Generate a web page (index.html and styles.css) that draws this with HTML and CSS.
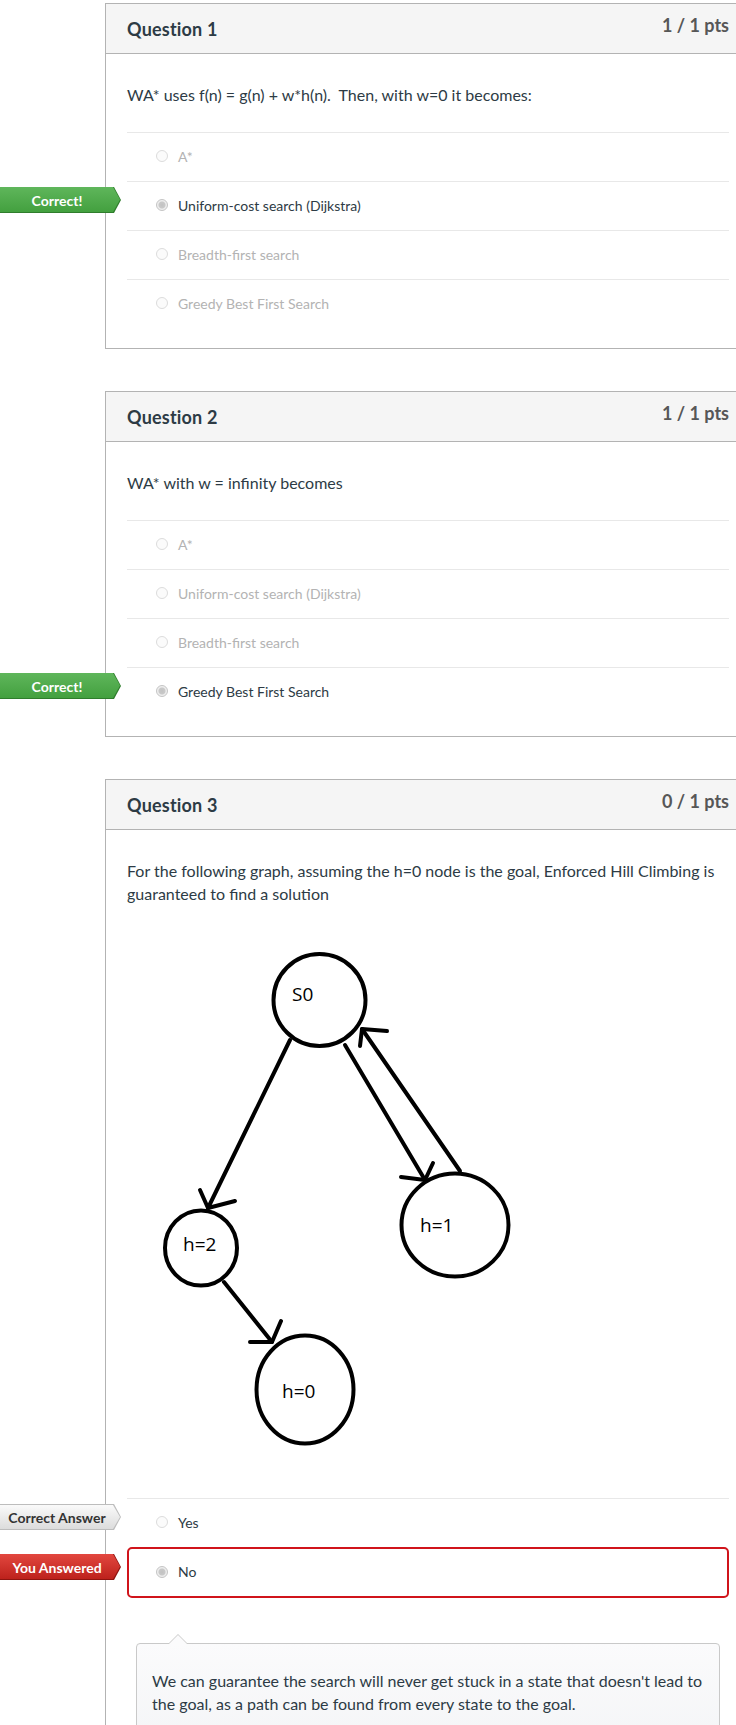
FILE: index.html
```html
<!DOCTYPE html>
<html>
<head>
<meta charset="utf-8">
<link rel="stylesheet" href="styles.css">
</head>
<body>
<div class="page">

  <div class="question">
    <div class="q-header"><span class="q-title">Question 1</span><span class="q-pts">1 / 1 pts</span></div>
    <div class="q-body">
      <div class="q-text">WA* uses f(n) = g(n) + w*h(n).&nbsp; Then, with w=0 it becomes:</div>
      <div class="answers">
        <div class="answer"><span class="radio"></span><span class="label">A*</span></div>
        <div class="answer selected"><span class="badge badge-correct">Correct!</span><span class="radio checked"></span><span class="label">Uniform-cost search (Dijkstra)</span></div>
        <div class="answer"><span class="radio"></span><span class="label">Breadth-first search</span></div>
        <div class="answer"><span class="radio"></span><span class="label">Greedy Best First Search</span></div>
      </div>
    </div>
  </div>

  <div class="question">
    <div class="q-header"><span class="q-title">Question 2</span><span class="q-pts">1 / 1 pts</span></div>
    <div class="q-body">
      <div class="q-text">WA* with w = infinity becomes</div>
      <div class="answers">
        <div class="answer"><span class="radio"></span><span class="label">A*</span></div>
        <div class="answer"><span class="radio"></span><span class="label">Uniform-cost search (Dijkstra)</span></div>
        <div class="answer"><span class="radio"></span><span class="label">Breadth-first search</span></div>
        <div class="answer selected"><span class="badge badge-correct">Correct!</span><span class="radio checked"></span><span class="label">Greedy Best First Search</span></div>
      </div>
    </div>
  </div>

  <div class="question">
    <div class="q-header"><span class="q-title">Question 3</span><span class="q-pts">0 / 1 pts</span></div>
    <div class="q-body">
      <div class="q-text">For the following graph, assuming the h=0 node is the goal, Enforced Hill Climbing is guaranteed to find a solution</div>
      <svg class="graph" width="420" height="567" viewBox="127 905 420 567" xmlns="http://www.w3.org/2000/svg">
        <g fill="none" stroke="#000" stroke-width="4" stroke-linecap="round" stroke-linejoin="round">
          <ellipse cx="319.5" cy="1000" rx="46" ry="46"/>
          <ellipse cx="201" cy="1248" rx="36" ry="37.5"/>
          <ellipse cx="455" cy="1225" rx="53.5" ry="51.5"/>
          <ellipse cx="305" cy="1389.5" rx="48.5" ry="54"/>
          <path d="M290 1040 L208 1208"/>
          <path d="M200 1190 L208 1208 L235 1201"/>
          <path d="M345 1045 L425 1180"/>
          <path d="M401 1177 L425 1180 L433 1163"/>
          <path d="M460 1171 L362 1029"/>
          <path d="M387 1031 L362 1029 L360 1046"/>
          <path d="M224 1282 L272 1342"/>
          <path d="M250 1342 L272 1342 L281 1321"/>
        </g>
        <g class="node-label">
          <text x="292" y="1001">S0</text>
          <text x="183" y="1251">h=2</text>
          <text x="420" y="1232">h=1</text>
          <text x="282" y="1398">h=0</text>
        </g>
      </svg>
      <div class="answers">
        <div class="answer shown"><span class="badge badge-answer">Correct Answer</span><span class="radio"></span><span class="label">Yes</span></div>
        <div class="answer wrong"><span class="badge badge-wrong">You Answered</span><span class="radio checked"></span><span class="label">No</span></div>
      </div>
      <div class="comment">
        <p>We can guarantee the search will never get stuck in a state that doesn't lead to the goal, as a path can be found from every state to the goal.</p>
      </div>
    </div>
  </div>

</div>
</body>
</html>
```

FILE: styles.css
```css
html, body {
  margin: 0;
  padding: 0;
  background: #fff;
  overflow: hidden;
}

body {
  font-family: Lato, "Open Sans", "Liberation Sans", sans-serif;
  color: #2d3b45;
}

.page {
  padding-top: 3px;
  width: 760px;
}

.question {
  width: 646px;
  margin-left: 105px;
  margin-bottom: 42px;
  border: 1px solid #b3b3b3;
  box-sizing: border-box;
  background: #fff;
}

.q-header {
  height: 50px;
  box-sizing: border-box;
  background: #f5f5f5;
  border-bottom: 1px solid #b3b3b3;
  padding: 0 21px;
  display: flex;
  align-items: center;
  justify-content: space-between;
}

.q-title {
  font-size: 18px;
  font-weight: 700;
  line-height: 22px;
  letter-spacing: 0.2px;
  color: #2d3b45;
}

.q-pts {
  font-size: 18px;
  font-weight: 700;
  line-height: 22px;
  color: #575757;
  margin-bottom: 8px;
}

.q-body {
  padding: 0 21px 20px;
}

.q-text {
  padding-top: 29px;
  font-size: 16px;
  line-height: 23px;
  color: #2d3b45;
}

.graph {
  display: block;
}

.node-label text {
  font-family: "Open Sans", "DejaVu Sans", sans-serif;
  font-size: 19px;
  fill: #000;
}

.answers {
  margin-top: 26px;
}

.answer {
  position: relative;
  height: 49px;
  box-sizing: border-box;
  border-top: 1px solid #e8e8e8;
  padding-bottom: 2px;
  display: flex;
  align-items: center;
  font-size: 14px;
}

.answer .label {
  color: #b3b3b3;
}

.answer.selected .label,
.answer.wrong .label,
.answer.shown .label {
  color: #2d3b45;
}

.radio {
  width: 12px;
  height: 12px;
  box-sizing: border-box;
  border-radius: 50%;
  border: 1px solid #dcdcdc;
  background: #fbfbfb;
  margin-left: 29px;
  margin-right: 10px;
  flex: none;
}

.radio.checked {
  border-color: #c4c4c4;
  background: radial-gradient(circle, #c2c2c2 0, #c9c9c9 3px, #ececec 4px, #f4f4f4 6px);
}

.answer.wrong {
  height: 51px;
  border: 2px solid #d0141b;
  border-radius: 5px;
}

.answer.wrong .radio {
  margin-left: 27px;
}

.badge {
  position: absolute;
  top: 5px;
  left: -127px;
  width: 121px;
  height: 26px;
  box-sizing: border-box;
  padding-right: 7px;
  display: flex;
  align-items: center;
  justify-content: center;
  font-size: 14px;
  font-weight: 700;
  z-index: 2;
  clip-path: polygon(0 0, 114px 0, 121px 50%, 114px 100%, 0 100%);
}

.badge::before {
  content: "";
  position: absolute;
  z-index: -1;
  left: 0;
  top: 0;
  right: 1px;
  bottom: 1px;
  clip-path: polygon(0 0, 113px 0, 120px 50%, 113px 100%, 0 100%);
}

.badge-correct {
  color: #fff;
  background: #2f7d2c;
}

.badge-correct::before {
  background: linear-gradient(#5fb65b, #43a03f);
}

.badge-answer {
  color: #333;
  background: #bdbdbd;
}

.badge-answer::before {
  top: 1px;
  right: 1px;
  background: linear-gradient(#fafafa, #dcdcdc);
}

.badge-wrong {
  color: #fff;
  background: #8f1410;
  left: -129px;
}

.badge-wrong::before {
  background: linear-gradient(#e2473f, #bd221c);
}

.comment {
  position: relative;
  margin: 45px 9px 0;
  border: 1px solid #c9c9c9;
  border-radius: 4px;
  background: linear-gradient(#fbfbfc, #f4f5f7);
  padding: 25px 15px 30px;
}

.comment::before,
.comment::after {
  content: "";
  position: absolute;
  left: 31px;
  width: 0;
  height: 0;
  border-left: 10px solid transparent;
  border-right: 10px solid transparent;
}

.comment::before {
  top: -10px;
  border-bottom: 10px solid #c9c9c9;
}

.comment::after {
  top: -9px;
  border-bottom: 10px solid #fbfbfc;
}

.comment p {
  margin: 0;
  font-size: 16px;
  line-height: 23px;
  color: #2d3b45;
}
```
